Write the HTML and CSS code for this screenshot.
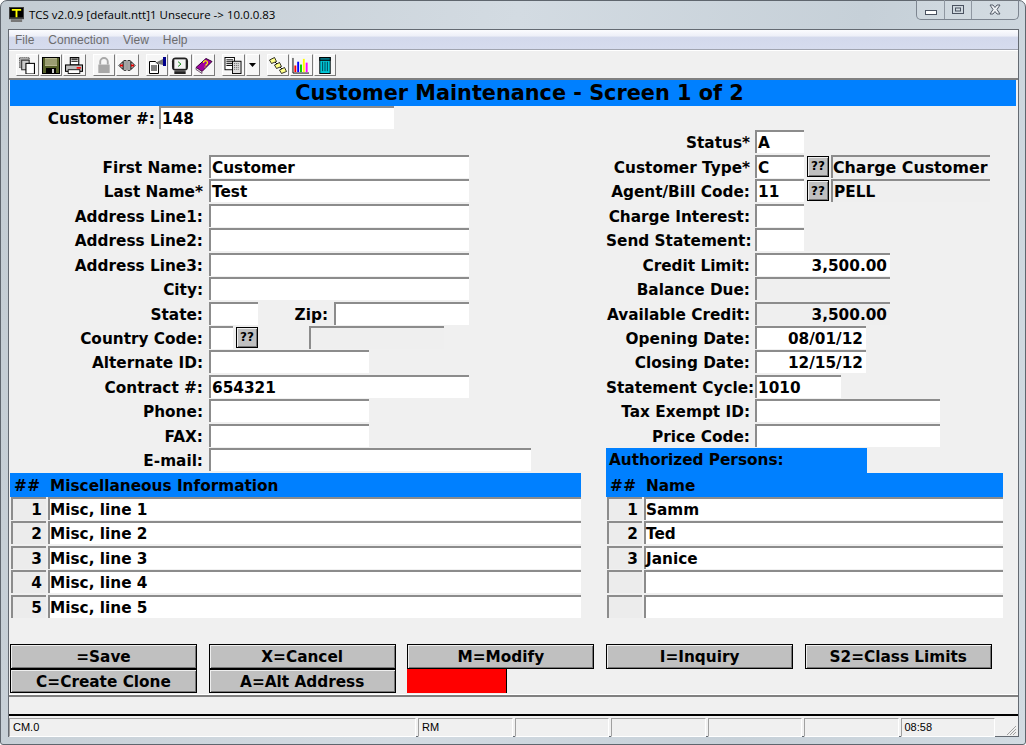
FILE: index.html
```html
<!DOCTYPE html>
<html lang="en">
<head>
<meta charset="utf-8">
<title>TCS v2.0.9</title>
<link rel="stylesheet" href="styles.css">
</head>
<body>
<div class="window">
  <header class="titlebar">
    <svg class="appicon" viewBox="0 0 16 16"><rect x="0" y="0" width="16" height="13" fill="#444"/><rect x="1" y="1" width="14" height="10" fill="#000"/><path d="M3 2h10v2H9v7H7V4H3z" fill="#ff0"/><rect x="2" y="13" width="12" height="3" fill="#777"/></svg>
    <span class="titletext">TCS v2.0.9 [default.ntt]1 Unsecure -&gt; 10.0.0.83</span>
    <div class="winbtns">
      <span class="winbtn min"><svg viewBox="0 0 14 8" width="14" height="8"><rect x="1.500" y="2.500" width="11" height="4" fill="#fff" stroke="#4a5260"/></svg></span>
      <span class="winbtn max"><svg viewBox="0 0 14 12" width="14" height="12"><rect x="1.500" y="1.500" width="11" height="8" fill="none" stroke="#4a5260"/><rect x="4.500" y="4" width="5" height="3" fill="none" stroke="#4a5260"/></svg></span>
      <span class="winbtn close"><svg viewBox="0 0 14 12" width="14" height="12"><path d="M2 1h3l2 2.500L9 1h3L9 5.500l3 4.500H9L7 7.500 5 10H2l3-4.500z" fill="#eef1f4" stroke="#555c68"/></svg></span>
    </div>
  </header>
  <div class="client">
    <nav class="menubar"><span>File</span><span>Connection</span><span>View</span><span>Help</span></nav>
    <div class="toolbar">
      <div class="toolgroup">
        <span class="tool"><svg viewBox="0 0 16 16"><rect x="1" y="0" width="9" height="10" fill="#aaa" stroke="#555" stroke-dasharray="1 1"/><rect x="3" y="3" width="7" height="9" fill="#ccc" stroke="#333"/><rect x="7" y="6" width="8" height="10" fill="#fff" stroke="#000"/></svg></span>
        <span class="tool"><svg viewBox="0 0 18 17"><rect x="0.500" y="0.500" width="17" height="16" fill="#55602a" stroke="#000"/><rect x="3" y="1" width="12" height="8" fill="#b8b890"/><path d="M3 3h12M3 5h12M3 7h12" stroke="#55602a" stroke-width="0.600"/><rect x="4" y="11" width="10" height="6" fill="#000"/><rect x="10" y="12" width="2" height="4" fill="#ccc"/></svg></span>
        <span class="tool"><svg viewBox="0 0 17 16"><rect x="5" y="0.500" width="8" height="7" fill="#fff" stroke="#000"/><path d="M6 2h6M6 4h6" stroke="#000"/><rect x="0.500" y="7.500" width="16" height="6" fill="#c0c0c0" stroke="#000"/><rect x="3" y="12" width="11" height="3.500" fill="#fff" stroke="#000" stroke-width="0.800"/><rect x="11" y="9.500" width="4" height="1.500" fill="#f00"/></svg></span>
      </div>
      <div class="toolgroup">
        <span class="tool"><svg viewBox="0 0 16 18"><path d="M4 8V5a4 4 0 0 1 8 0v3" fill="none" stroke="#a8a8a8" stroke-width="2"/><rect x="2" y="8" width="12" height="9" fill="#a8a8a8"/></svg></span>
        <span class="tool"><svg viewBox="0 0 18 14"><path d="M1 7l4-4v8z" fill="none" stroke="#000"/><path d="M17 7l-4-4v8z" fill="none" stroke="#000"/><rect x="6" y="2" width="2" height="10" fill="#fff" stroke="#000" stroke-width="0.700"/><rect x="10" y="2" width="2" height="10" fill="#fff" stroke="#000" stroke-width="0.700"/><path d="M2 6h3v2H2zM13 6h3v2h-3z" fill="#e00000"/></svg></span>
      </div>
      <div class="toolgroup">
        <span class="tool"><svg viewBox="0 0 18 17"><path d="M1.500 4.500h6l3 3v9h-9z" fill="#fff" stroke="#000"/><path d="M3 9h6M3 11h6M3 13h6" stroke="#000"/><path d="M7 6l8-4v6z" fill="#777"/><rect x="15" y="0" width="3" height="9" fill="#00008b"/></svg></span>
        <span class="tool"><svg viewBox="0 0 18 18"><rect x="0.500" y="0.500" width="17" height="14" rx="4" fill="#222"/><rect x="3" y="2.500" width="12" height="10" fill="#f4f4f4"/><path d="M7 5l3 2.500L7 10" fill="none" stroke="#008000"/><path d="M3 15h12v3H3z" fill="#222"/></svg></span>
        <span class="tool"><svg viewBox="0 0 18 16"><path d="M1 10l10-9 6 3-10 10z" fill="#a000a0" stroke="#300030"/><path d="M1 10l6 4v2l-6-4z" fill="#ddd" stroke="#300030" stroke-width="0.600"/><path d="M8.500 5.500a2 2 0 1 1 3 1.500l-1 1M9.500 9.500h1" fill="none" stroke="#ff0" stroke-width="1.200"/></svg></span>
      </div>
      <div class="toolgroup">
        <span class="tool"><svg viewBox="0 0 18 18"><rect x="0.500" y="0.500" width="10" height="13" fill="#fff" stroke="#000"/><path d="M2 3h7M2 5h7M2 7h7M2 9h7" stroke="#000"/><rect x="8.500" y="4.500" width="9" height="13" fill="#ddd" stroke="#000"/><path d="M10 7h6M10 9h6M10 11h6M10 13h6" stroke="#555" stroke-dasharray="1 1"/></svg></span>
        <span class="tool narrow"><svg viewBox="0 0 7 4" width="7" height="4"><path d="M0 0h7L3.500 4z" fill="#000"/></svg></span>
      </div>
      <div class="toolgroup">
        <span class="tool"><svg viewBox="0 0 18 17"><path d="M3 2l13 13" stroke="#000"/><path d="M0.500 3l5-2.500 2 4-5 2z" fill="#ff8" stroke="#000" stroke-width="0.800"/><path d="M5.500 8l5-2.500 2 4-5 2z" fill="#ff8" stroke="#000" stroke-width="0.800"/><path d="M10.500 13l5-2.500 2 4-5 2z" fill="#ff8" stroke="#000" stroke-width="0.800"/></svg></span>
        <span class="tool"><svg viewBox="0 0 18 18"><path d="M0.500 1v16h17" fill="none" stroke="#000"/><rect x="2" y="9" width="2" height="7" fill="#f00"/><rect x="5" y="5" width="2" height="11" fill="#00f"/><rect x="8" y="8" width="2" height="8" fill="#0c0"/><rect x="11" y="2" width="2" height="14" fill="#ff0"/><rect x="14" y="6" width="2" height="10" fill="#f0f"/></svg></span>
        <span class="tool"><svg viewBox="0 0 16 18"><rect x="2.500" y="0.500" width="11" height="17" fill="#00c8d8" stroke="#000"/><rect x="2.500" y="0.500" width="11" height="3" fill="#007080" stroke="#000"/><path d="M5.500 5v10M8 5v10M10.500 5v10" stroke="#004050"/></svg></span>
      </div>
    </div>
    <main class="terminal">
      <h1 class="screentitle">Customer Maintenance - Screen 1 of 2</h1>
      <div class="form">
        <section class="col left">
          <div class="row"><label class="lab lab-cust">Customer #:</label><span class="fld w235">148</span></div>
          <div class="row"></div>
          <div class="row"><label class="lab">First Name:</label><span class="fld w260">Customer</span></div>
          <div class="row"><label class="lab">Last Name*</label><span class="fld w260">Test</span></div>
          <div class="row"><label class="lab">Address Line1:</label><span class="fld w260"></span></div>
          <div class="row"><label class="lab">Address Line2:</label><span class="fld w260"></span></div>
          <div class="row"><label class="lab">Address Line3:</label><span class="fld w260"></span></div>
          <div class="row"><label class="lab">City:</label><span class="fld w260"></span></div>
          <div class="row"><label class="lab">State:</label><span class="fld w49"></span><label class="lab lab-zip">Zip:</label><span class="fld w135"></span></div>
          <div class="row"><label class="lab">Country Code:</label><span class="fld w24"></span><button class="q">??</button><span class="fld ro w135 gap-desc"></span></div>
          <div class="row"><label class="lab">Alternate ID:</label><span class="fld w160"></span></div>
          <div class="row"><label class="lab">Contract #:</label><span class="fld w260">654321</span></div>
          <div class="row"><label class="lab">Phone:</label><span class="fld w160"></span></div>
          <div class="row"><label class="lab">FAX:</label><span class="fld w160"></span></div>
          <div class="row"><label class="lab">E-mail:</label><span class="fld w322"></span></div>
          <div class="row thead"><span class="hnum">##</span><span>Miscellaneous Information</span></div>
          <div class="row trow"><span class="num">1</span><span class="cell">Misc, line 1</span></div>
          <div class="row trow"><span class="num">2</span><span class="cell">Misc, line 2</span></div>
          <div class="row trow"><span class="num">3</span><span class="cell">Misc, line 3</span></div>
          <div class="row trow"><span class="num">4</span><span class="cell">Misc, line 4</span></div>
          <div class="row trow"><span class="num">5</span><span class="cell">Misc, line 5</span></div>
        </section>
        <section class="col right">
          <div class="row"></div>
          <div class="row"><label class="lab">Status*</label><span class="fld w49">A</span></div>
          <div class="row"><label class="lab">Customer Type*</label><span class="fld w49">C</span><button class="q q-r">??</button><span class="fld ro w159 wide">Charge Customer</span></div>
          <div class="row"><label class="lab">Agent/Bill Code:</label><span class="fld w49">11</span><button class="q q-r">??</button><span class="fld ro w159">PELL</span></div>
          <div class="row"><label class="lab">Charge Interest:</label><span class="fld w49"></span></div>
          <div class="row"><label class="lab">Send Statement:</label><span class="fld w49"></span></div>
          <div class="row"><label class="lab">Credit Limit:</label><span class="fld w135 num-r">3,500.00</span></div>
          <div class="row"><label class="lab">Balance Due:</label><span class="fld ro w135 num-r"></span></div>
          <div class="row"><label class="lab">Available Credit:</label><span class="fld ro w135 num-r">3,500.00</span></div>
          <div class="row"><label class="lab">Opening Date:</label><span class="fld w111 num-r">08/01/12</span></div>
          <div class="row"><label class="lab">Closing Date:</label><span class="fld w111 num-r">12/15/12</span></div>
          <div class="row"><label class="lab">Statement Cycle:</label><span class="fld w86">1010</span></div>
          <div class="row"><label class="lab">Tax Exempt ID:</label><span class="fld w185"></span></div>
          <div class="row"><label class="lab">Price Code:</label><span class="fld w185"></span></div>
          <div class="row"><span class="auth">Authorized Persons:</span></div>
          <div class="row thead"><span class="hnum">##</span><span>Name</span></div>
          <div class="row trow"><span class="num">1</span><span class="cell">Samm</span></div>
          <div class="row trow"><span class="num">2</span><span class="cell">Ted</span></div>
          <div class="row trow"><span class="num">3</span><span class="cell">Janice</span></div>
          <div class="row trow"><span class="num"></span><span class="cell"></span></div>
          <div class="row trow"><span class="num"></span><span class="cell"></span></div>
        </section>
      </div>
      <div class="actions">
        <button class="act">=Save</button>
        <button class="act">X=Cancel</button>
        <button class="act">M=Modify</button>
        <button class="act">I=Inquiry</button>
        <button class="act">S2=Class Limits</button>
        <button class="act">C=Create Clone</button>
        <button class="act">A=Alt Address</button>
        <span class="alert"></span>
      </div>
    </main>
    <div class="msgbar"></div>
    <footer class="statusbar">
      <span class="st st1">CM.0</span><span class="st">RM</span><span class="st"></span><span class="st"></span><span class="st"></span><span class="st"></span><span class="st">08:58</span>
      <svg class="grip" viewBox="0 0 12 12" width="12" height="12"><path d="M11 2L2 11M11 5l-6 6M11 8l-3 3" stroke="#a0a0a0"/></svg>
    </footer>
  </div>
</div>
</body>
</html>
```

FILE: styles.css
```css
* { box-sizing: border-box; }
html, body { margin: 0; padding: 0; height: 745px; overflow: hidden; background: #fff; }
.window {
  width: 1026px; height: 745px;
  border: 1px solid #5f666e; border-radius: 7px 7px 3px 3px;
  background: linear-gradient(100deg, #c3ccd3 0%, #d3dbe2 45%, #c6d0d8 75%, #d2dbe2 100%);
  display: flex; flex-direction: column;
  padding: 0 7px 7px 7px;
}
.titlebar { height: 28px; flex: none; display: flex; align-items: center; position: relative; padding-left: 1px; }
.appicon { width: 15px; height: 15px; margin-top: -1px; }
.titletext { font: 11.500px "Open Sans", "Noto Sans", sans-serif; color: #000; margin-left: 5px; margin-top: -2px; }
.winbtns {
  position: absolute; right: -1px; top: -1px; height: 20px; width: 103px;
  display: flex; border: 1px solid #7d8590; border-top: 0; border-radius: 0 0 5px 5px;
  background: rgba(255,255,255,.12);
}
.winbtn { display: flex; align-items: center; justify-content: center; border-right: 1px solid #8f97a1; }
.min { width: 28px; padding-top: 4px; }
.max { width: 27px; }
.close { flex: 1; border-right: 0; }
.client { flex: 1; min-height: 0; border: 1px solid #646a72; background: #f0f0f0; display: flex; flex-direction: column; width: 1011px; }
.menubar {
  height: 20px; flex: none; display: flex; gap: 14px; padding-left: 6px; align-items: center;
  background: linear-gradient(#fbfcfe 0%, #eef0f8 30%, #d3d9ec 40%, #d6dcee 100%);
  border-bottom: 1px solid #a0a4b0;
}
.menubar span { font: 12px "Liberation Sans", sans-serif; color: #6d6d6d; }
.toolbar { height: 28px; flex: none; display: flex; padding: 3px 0 0 7px; gap: 7px; background: #f0f0f0; border-top: 1px solid #fff; }
.toolgroup { display: flex; gap: 1px; height: 22px; }
.tool { width: 22.500px; height: 22px; display: flex; align-items: center; justify-content: center; background: #f6f6f6; border: 1px solid; border-color: #fff #7a7a7a #7a7a7a #fff; }
.tool svg { width: 18px; height: 17px; }
.tool.narrow { width: 14px; }
.tool.narrow svg { width: 7px; height: 4px; }
.terminal { height: 617px; flex: none; border-top: 2px solid #808080; border-bottom: 1px solid #fff; padding: 0 1px; background: #f0f0f0; font: bold 15.300px "DejaVu Sans", sans-serif; color: #000; }
.screentitle { margin: 0; height: 26px; padding-left: 13px; background: #0080ff; font: bold 20.800px/27px "DejaVu Sans", sans-serif; text-align: center; color: #000; width: 1006px; }
.form { display: flex; gap: 25px; }
.col { display: flex; flex-direction: column; }
.left { width: 571px; }
.right { width: 397px; }
.row { height: 24.450px; display: flex; flex: none; }
.lab { flex: none; text-align: right; line-height: 26px; white-space: nowrap; }
.left .lab { width: 193px; margin-right: 6px; }
.left .lab-cust { width: 145px; margin-right: 4px; }
.left .lab-zip { width: 70px; margin-right: 6px; }
.right .lab { width: 144px; margin-right: 5px; }
.fld {
  flex: none; height: 23px; background: #fff; border: 2px solid #8c8c8c; border-width: 2px 0 0 2px;
  padding-left: 1px; line-height: 22px; white-space: nowrap; overflow: hidden;
}
.ro { background: #efefef; }
.wide { font-size: 15.800px; padding-left: 0; }
.num-r { text-align: right; padding-right: 3px; }
.w24 { width: 24px; } .w49 { width: 49px; } .w86 { width: 86px; } .w111 { width: 111px; }
.w135 { width: 135px; } .w159 { width: 159px; } .w160 { width: 160px; } .w185 { width: 185px; }
.w235 { width: 235px; } .w260 { width: 260px; } .w322 { width: 322px; }
.q {
  flex: none; width: 22px; height: 21px; margin: 1px 0 0 3px; padding: 0;
  background: #c0c0c0; border: 1px solid #000; box-shadow: inset 1px 1px 0 #eee, inset -1px -1px 0 #777;
  font: bold 12px "DejaVu Sans", sans-serif; color: #000;
}
.q-r { margin-right: 2px; }
.gap-desc { margin-left: 51px; }
.auth { background: #0080ff; width: 261px; padding-left: 3px; line-height: 25px; height: 24.450px; }
.thead { background: #0080ff; line-height: 26px; }
.hnum { width: 40px; padding-left: 4px; letter-spacing: .5px; }
.trow { gap: 2px; padding-left: 1px; }
.num { width: 35px; height: 23px; background: #ececec; border: 2px solid #8c8c8c; border-width: 2px 0 0 2px; text-align: right; padding-right: 4px; line-height: 23px; flex: none; }
.cell { flex: 1; height: 23px; background: #fff; border: 2px solid #8c8c8c; border-width: 2px 0 0 2px; padding-left: 0; line-height: 23px; }
.actions { display: grid; grid-template-columns: repeat(5, 187px); column-gap: 11.700px; grid-auto-rows: 24.500px; margin-top: 25px; }
.act {
  height: 24.500px; padding: 2px 0 0; background: #c0c0c0; border: 1px solid #000;
  box-shadow: inset 1px 1px 0 #eee, inset -1px -1px 0 #777;
  font: bold 15.300px "DejaVu Sans", sans-serif; color: #000;
}
.alert { background: #ff0000; width: 100px; height: 24.500px; border-right: 1px solid #000; }
.msgbar { height: 19px; flex: none; background: #f0f0f0; border-top: 2px solid #808080; }
.statusbar { flex: 1; min-height: 0; display: flex; gap: 2px; border-top: 2px solid #000; padding-top: 2px; position: relative; background: #f0f0f0; font: 11px "Liberation Sans", sans-serif; color: #000; }
.st { border: 1px solid; border-color: #a0a0a0 #fff #fff #a0a0a0; height: 19px; line-height: 17px; padding-left: 3px; flex: none; width: 94.500px; }
.st1 { width: 407px; }
.grip { position: absolute; right: 1px; bottom: 0; }
```
